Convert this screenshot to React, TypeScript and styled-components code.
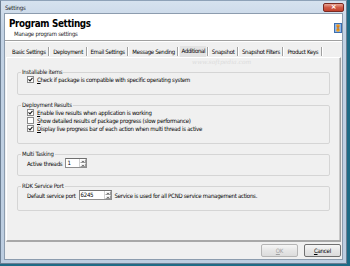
import React from "react";
import styled, { createGlobalStyle } from "styled-components";

const Global = createGlobalStyle`
  html, body {
    margin: 0;
    padding: 0;
    background: #1e6b86;
    overflow: hidden;
  }
  * { box-sizing: border-box; }
`;

const font = `"Liberation Sans Narrow", "DejaVu Sans Condensed", "Liberation Sans", sans-serif`;

const Window = styled.div`
  width: 347px;
  height: 264px;
  background: linear-gradient(#d6e2ef, #c2d2e4 30px, #bccde0);
  border: 1px solid #6d7f93;
  border-top-color: #8ea2b8;
  display: flex;
  flex-direction: column;
  font-family: ${font};
  color: #000;
`;

const TitleBar = styled.div`
  height: 12px;
  flex: none;
  display: flex;
  align-items: center;
  justify-content: space-between;
  padding: 0 2px 0 4px;
  font-size: 6px;
  letter-spacing: -0.2px;
  color: #1a1a1a;
`;

const CloseBtn = styled.div`
  width: 21px;
  height: 9px;
  margin-top: 1px;
  border: 1px solid #7a2a22;
  border-radius: 2px;
  background: linear-gradient(#e8a493, #cf5a45 50%, #c2412c);
  display: flex;
  align-items: center;
  justify-content: center;
  color: #fff;
  font-family: "DejaVu Sans", sans-serif;
  font-size: 7px;
  font-weight: bold;
  line-height: 1;
`;

const Client = styled.div`
  flex: 1;
  margin: 0 3px 3px 3px;
  border: 1px solid #8c9cae;
  background: #f0f0f0;
  display: flex;
  flex-direction: column;
`;

const Header = styled.div`
  height: 27px;
  flex: none;
  background: #fff;
  border-bottom: 1px solid #a0a0a0;
  box-shadow: 0 1px 0 #fff;
  display: flex;
  justify-content: space-between;
  align-items: flex-start;
  padding: 4px 0 0 4px;
`;

const Titles = styled.div`
  display: flex;
  flex-direction: column;
`;

const Title = styled.div`
  font-weight: bold;
  font-size: 9.8px;
  letter-spacing: -0.35px;
  line-height: 12px;
`;

const Subtitle = styled.div`
  font-size: 6px;
  letter-spacing: -0.25px;
  line-height: 8px;
  padding-left: 5px;
  color: #222;
`;

const HeaderIcon = styled.svg`
  margin-top: 5px;
`;

const Body = styled.div`
  flex: 1;
  display: flex;
  flex-direction: column;
  padding: 4px 1px 0 1px;
`;

const Tabs = styled.div`
  display: flex;
  align-items: center;
  height: 12px;
  padding-left: 4px;
`;

const Tab = styled.div<{ $active?: boolean }>`
  font-size: 6px;
  letter-spacing: -0.32px;
  line-height: 9px;
  height: 11px;
  padding: 0 1px;
  border: 1px solid ${(p) => (p.$active ? "#7a7a7a #fff #fff #7a7a7a" : "transparent")};
  background: ${(p) => (p.$active ? "#e3e3e3" : "transparent")};
  white-space: nowrap;
`;

const TabSep = styled.div`
  width: 2px;
  height: 9px;
  margin: 0 1px 0 0.5px;
  border-left: 1px solid #a0a0a0;
  border-right: 1px solid #fff;
`;

const Watermark = styled.div<{ $top: number; $left: number }>`
  position: absolute;
  top: ${(p) => p.$top}px;
  left: ${(p) => p.$left}px;
  font-family: "DejaVu Serif", serif;
  font-style: italic;
  font-size: 6px;
  color: #dcdcdc;
  pointer-events: none;
  white-space: nowrap;
`;

const Panel = styled.div`
  flex: none;
  height: 185px;
  border: 1px solid #fff;
  border-right-color: #a0a0a0;
  border-bottom: 2px solid #a8a8a8;
  box-shadow: inset -1px 0 0 #c8c8c8;
  padding: 10px 10px 0 10px;
  display: flex;
  flex-direction: column;
  gap: 6px;
  position: relative;
`;

const Group = styled.fieldset<{ $h: number }>`
  margin: 0;
  height: ${(p) => p.$h}px;
  padding: 0 4px 1px 9px;
  border: 1px solid #d5d5d5;
  border-radius: 2px;
  display: flex;
  flex-direction: column;
  justify-content: center;
  gap: 1px;
  min-width: 0;
`;

const Legend = styled.legend`
  font-size: 6px;
  letter-spacing: -0.25px;
  line-height: 8px;
  padding: 0 1px;
  margin-left: -6px;
  color: #111;
`;

const Row = styled.label`
  display: flex;
  align-items: center;
  gap: 3px;
  font-size: 6px;
  letter-spacing: -0.25px;
  line-height: 7px;
  height: 7px;
  white-space: nowrap;
`;

const Box = styled.span`
  width: 7px;
  height: 7px;
  flex: none;
  background: #fff;
  border: 1px solid #8a8a8a;
  display: flex;
  align-items: center;
  justify-content: center;
`;

const Check = ({ on }: { on: boolean }) => (
  <Box>
    {on && (
      <svg width="5" height="5" viewBox="0 0 5 5">
        <path d="M0.5 2.4 L2 3.9 L4.5 0.8" fill="none" stroke="#1b1b1b" strokeWidth="1.1" />
      </svg>
    )}
  </Box>
);

const U = styled.span`
  text-decoration: underline;
  text-decoration-thickness: 0.5px;
  text-underline-offset: 1px;
`;

const FieldRow = styled.div`
  display: flex;
  align-items: center;
  gap: 3px;
  font-size: 6px;
  letter-spacing: -0.25px;
  white-space: nowrap;
`;

const Spin = styled.div<{ $w: number }>`
  width: ${(p) => p.$w}px;
  height: 10px;
  background: #fff;
  border: 1px solid #8d8d8d;
  border-top-color: #6f6f6f;
  display: flex;
  align-items: stretch;
  line-height: 8px;
`;

const SpinValue = styled.div`
  flex: 1;
  padding-left: 1px;
`;

const SpinBtns = styled.div`
  width: 7px;
  display: flex;
  flex-direction: column;
  border-left: 1px solid #d0d0d0;
`;

const SpinBtn = styled.div<{ $up?: boolean }>`
  flex: 1;
  background: #ececec;
  border: 1px solid #fff;
  border-right-color: #9a9a9a;
  border-bottom-color: #9a9a9a;
  display: flex;
  align-items: center;
  justify-content: center;
  &::after {
    content: "";
    border-left: 1.5px solid transparent;
    border-right: 1.5px solid transparent;
    ${(p) => (p.$up ? "border-bottom: 1.5px solid #000;" : "border-top: 1.5px solid #000;")}
  }
`;

const Spinner = ({ value, w }: { value: string; w: number }) => (
  <Spin $w={w}>
    <SpinValue>{value}</SpinValue>
    <SpinBtns>
      <SpinBtn $up />
      <SpinBtn />
    </SpinBtns>
  </Spin>
);

const Footer = styled.div`
  flex: 1;
  display: flex;
  justify-content: flex-end;
  align-items: center;
  gap: 6px;
`;

const Button = styled.button<{ $disabled?: boolean }>`
  width: 37px;
  height: 13px;
  padding: 0;
  font-family: ${font};
  font-size: 6px;
  letter-spacing: -0.2px;
  color: ${(p) => (p.$disabled ? "#a0a0a0" : "#000")};
  background: linear-gradient(#f6f6f6, #e6e6e6 50%, #dcdcdc);
  border: 1px solid ${(p) => (p.$disabled ? "#b5b5b5" : "#707070")};
  border-radius: 2px;
`;

const tabs = [
  "Basic Settings",
  "Deployment",
  "Email Settings",
  "Message Sending",
  "Additional",
  "Snapshot",
  "Snapshot Filters",
  "Product Keys",
];

export default function App() {
  return (
    <>
      <Global />
      <Window>
        <TitleBar>
          <span>Settings</span>
          <CloseBtn>×</CloseBtn>
        </TitleBar>
        <Client>
          <Header>
            <Titles>
              <Title>Program Settings</Title>
              <Subtitle>Manage program settings</Subtitle>
            </Titles>
            <HeaderIcon width="8" height="10" viewBox="0 0 8 10">
              <rect x="0" y="0" width="8" height="10" fill="#5b8fd0" />
              <rect x="0.5" y="0.5" width="7" height="9" fill="#8fb6e8" stroke="#3d6fb0" strokeWidth="1" />
              <circle cx="4" cy="3" r="1.8" fill="#f29a1c" />
              <circle cx="4" cy="7" r="1.8" fill="#f0a21e" />
              <rect x="3.5" y="3" width="1" height="4" fill="#c0651a" />
            </HeaderIcon>
          </Header>
          <Body>
            <Tabs>
              {tabs.map((t) => (
                <React.Fragment key={t}>
                  <Tab $active={t === "Additional"}>{t}</Tab>
                  <TabSep />
                </React.Fragment>
              ))}
            </Tabs>
            <Panel>
              <Watermark $top={0} $left={185}>www.softpedia.com</Watermark>
              <Group $h={27}>
                <Legend>Installable items</Legend>
                <Row>
                  <Check on />
                  <span><U>C</U>heck if package is compatible with specific operating system</span>
                </Row>
              </Group>
              <Group $h={43}>
                <Legend>Deployment Results</Legend>
                <Row>
                  <Check on />
                  <span><U>E</U>nable live results when application is working</span>
                </Row>
                <Row>
                  <Check on={false} />
                  <span><U>S</U>how detailed results of package progress (slow performance)</span>
                </Row>
                <Row>
                  <Check on />
                  <span><U>D</U>isplay live progress bar of each action when multi thread is active</span>
                </Row>
              </Group>
              <Group $h={26}>
                <Legend>Multi Tasking</Legend>
                <FieldRow>
                  <span>Active threads</span>
                  <Spinner value="1" w={22} />
                </FieldRow>
              </Group>
              <Group $h={29}>
                <Legend>RDK Service Port</Legend>
                <FieldRow>
                  <span>Default service port</span>
                  <Spinner value="6245" w={33} />
                  <span>Service is used for all PCND service management actions.</span>
                </FieldRow>
              </Group>
            </Panel>
            <Footer>
              <Button $disabled><U>O</U>K</Button>
              <Button><U>C</U>ancel</Button>
            </Footer>
          </Body>
        </Client>
      </Window>
    </>
  );
}
